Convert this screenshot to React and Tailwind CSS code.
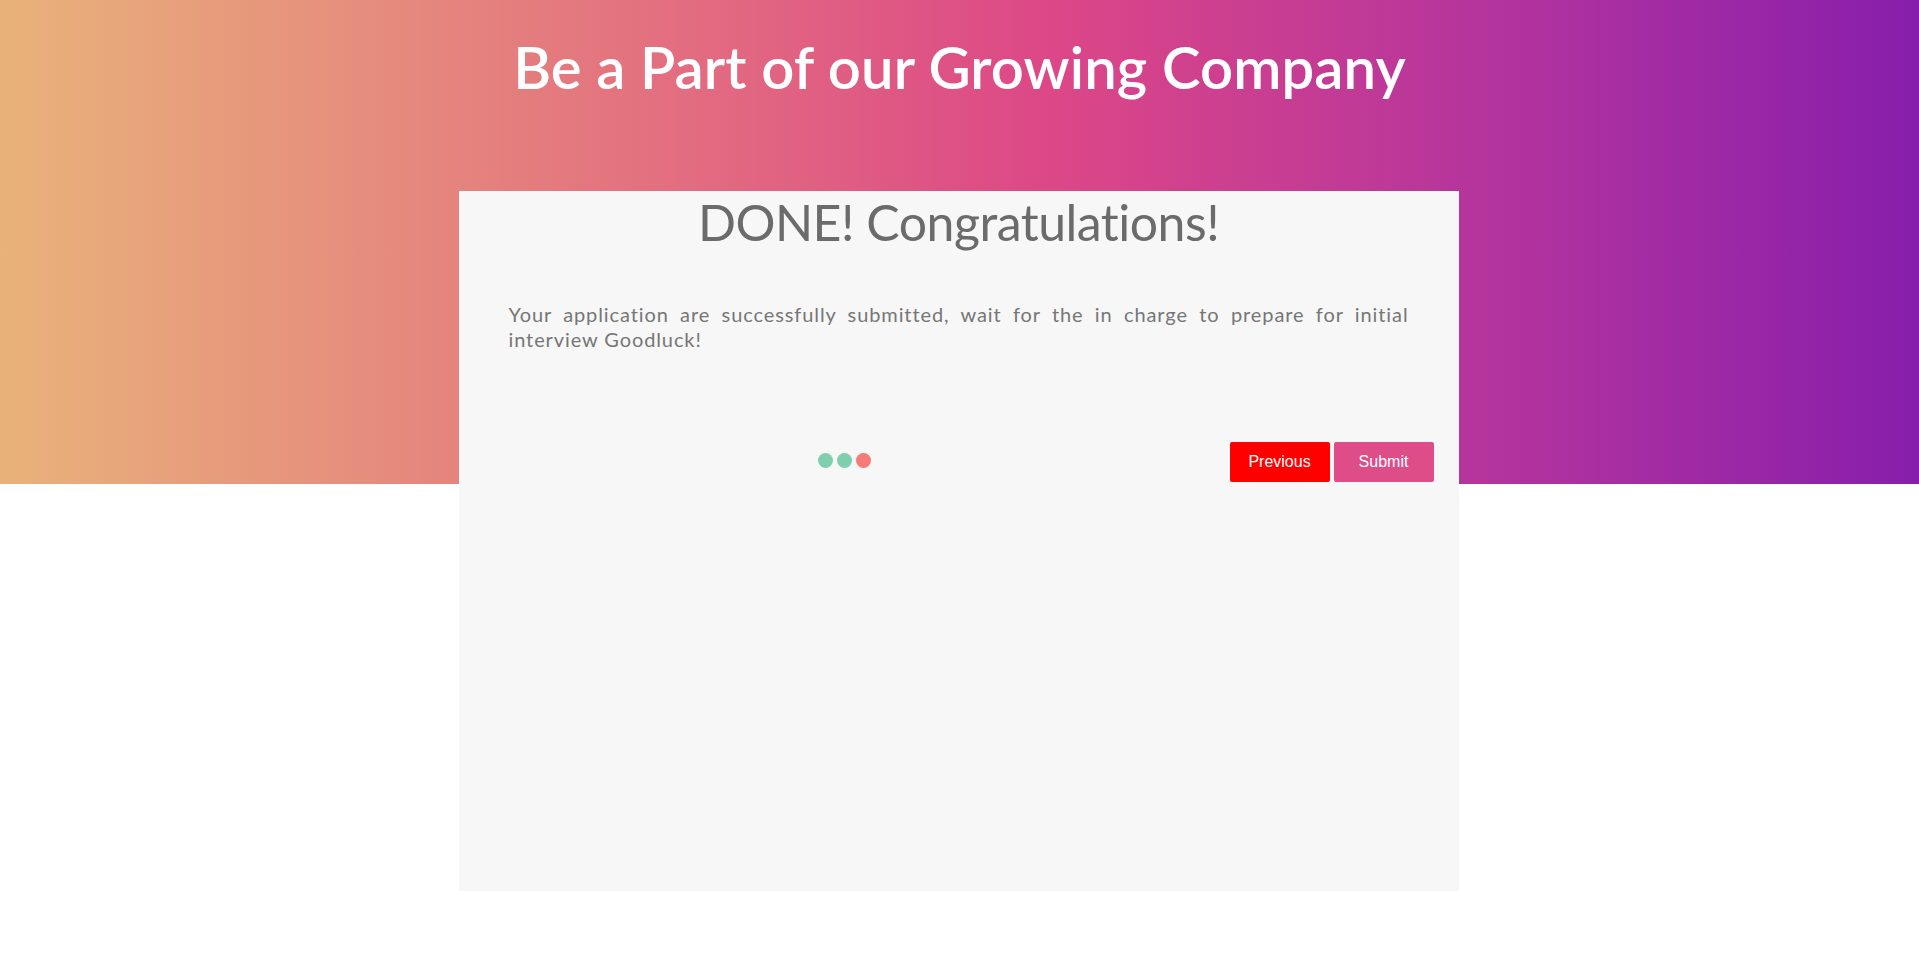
export default function App() {
  return (
    <div
      className="min-h-[964px] w-full bg-white bg-no-repeat bg-[length:100%_484px] bg-[linear-gradient(to_right,#e9b27a_0%,#e3727f_33%,#dc4787_55%,#b0329f_80%,#871eab_100%)]"
      style={{ fontFamily: "Lato, 'Open Sans', sans-serif" }}
    >
      <h1 className="pt-[34px] text-center text-[58px] leading-[66px] font-semibold text-white tracking-[0.1px]">
        Be a Part of our Growing Company
      </h1>
      <div className="mx-auto mt-[91px] flex h-[700px] w-[1000px] -translate-x-px flex-col bg-[#f7f7f7]">
        <h2 className="pt-[1px] text-center text-[50px] leading-[60px] text-[#6b6b6b] tracking-[-0.5px]">
          DONE! Congratulations!
        </h2>
        <p className="mt-[50px] px-[50px] text-justify text-[20px] leading-[25px] tracking-[0.9px] text-[#767676]">
          Your application are successfully submitted, wait for the in charge to prepare for initial interview Goodluck!
        </p>
        <div className="mt-[90px] flex items-center pr-[25px]">
          <div className="flex flex-1 -translate-y-[2px] justify-center gap-[4px]">
            <span className="h-[15px] w-[15px] rounded-full bg-[#7fcfae]" />
            <span className="h-[15px] w-[15px] rounded-full bg-[#7fcfae]" />
            <span className="h-[15px] w-[15px] rounded-full bg-[#f67a76]" />
          </div>
          <div className="ml-auto flex gap-[4px]" style={{ fontFamily: "'Liberation Sans', Arial, sans-serif" }}>
            <button className="h-[40px] w-[100px] rounded-[2px] bg-[#ff0000] text-[16px] text-white">Previous</button>
            <button className="h-[40px] w-[100px] rounded-[2px] bg-[#df4d89] text-[16px] text-white">Submit</button>
          </div>
        </div>
      </div>
    </div>
  );
}
